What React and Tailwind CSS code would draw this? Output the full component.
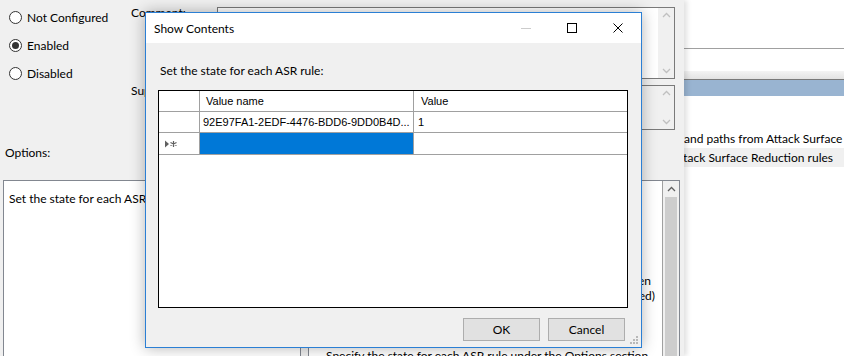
import React from 'react';

const ui = "font-['Lato','Noto_Sans',sans-serif] text-[12px] leading-[15px] text-black";
const grid = "font-['Liberation_Sans','Arial',sans-serif] text-[11px] text-black";

const Chevron = ({ up, color = '#c0c0c0' }) => (
  <svg width="9" height="6" viewBox="0 0 9 6">
    <path d={up ? 'M1 5 L4.5 1.5 L8 5' : 'M1 1 L4.5 4.5 L8 1'} fill="none" stroke={color} strokeWidth="1.3" />
  </svg>
);

const Radio = ({ label, checked }) => (
  <div className="h-[28px] flex items-center pl-[9px] gap-[5px]">
    <div className="w-[13px] h-[13px] rounded-full border border-[#333] bg-white flex items-center justify-center">
      {checked && <div className="w-[7px] h-[7px] rounded-full bg-[#333]" />}
    </div>
    <span>{label}</span>
  </div>
);

const TextBox = ({ className }) => (
  <div className={`border border-[#7a7a7a] flex justify-end ${className}`}>
    <div className="w-[16px] bg-[#f0f0f0] flex flex-col justify-between items-center py-[4px]">
      <Chevron up />
      <Chevron />
    </div>
  </div>
);

// help text, one entry per wrapped line; only the line ends past the dialog are visible
const helpLines = [
  { t: 'Set the state for each ASR rule.' },
  { t: '' },
  { t: 'After enabling this setting, you can set each rule' },
  { t: 'to the following in the options section:' },
  { t: '- Block: the rule will be applied' },
  { t: '' },
  { t: '- Audit Mode: if the rule would normally cause an event, then', right: 'pr-[11px]' },
  { t: 'it will be recorded (although the rule will not actually be applied)', right: 'pr-[7px]' },
  { t: '- Off: the rule will not be applied' },
  { t: '' },
  { t: '' },
  { t: 'Specify the state for each ASR rule under the Options section' },
];

const PolicyWindow = () => (
  <div className={`w-[684px] h-full bg-[#f0f0f0] flex flex-col relative z-10 shadow-[3px_0_5px_rgba(0,0,0,0.12)] ${ui}`}>
    {/* top: state + comment + supported on */}
    <div className="flex h-[130px]">
      <div className="w-[131px] pt-[3px] flex flex-col">
        <Radio label="Not Configured" />
        <Radio label="Enabled" checked />
        <Radio label="Disabled" />
      </div>
      <div className="w-[86px] flex flex-col pt-[5px]">
        <span>Comment:</span>
        <span className="mt-[63px]">Supported on:</span>
      </div>
      <div className="w-[458px] flex flex-col">
        <TextBox className="mt-[7px] h-[72px] bg-white" />
        <TextBox className="mt-[6px] h-[45px] bg-[#f0f0f0]" />
      </div>
    </div>

    <div className="flex h-[50px] pt-[15px]">
      <span className="pl-[5px] w-[308px]">Options:</span>
      <span className="pl-[4px]">Help:</span>
    </div>

    {/* options + help panels */}
    <div className="flex flex-1 min-h-0">
      <div className="ml-[3px] w-[298px] bg-white border border-[#828790] border-b-0 pt-[10px] pl-[5px]">
        Set the state for each ASR rule:
      </div>
      <div className="ml-[7px] w-[372px] bg-white border border-[#828790] border-b-0 flex">
        <div className="flex-1 min-w-0 pt-[2px] overflow-hidden">
          {helpLines.map((l, i) => (
            <div
              key={i}
              className={`h-[15px] whitespace-nowrap flex ${l.right ? `justify-end ${l.right}` : 'pl-[17px]'}`}
            >
              {l.t}
            </div>
          ))}
        </div>
        <div className="w-[17px] border-l border-[#a0a0a0] bg-[#f0f0f0] flex flex-col">
          <div className="h-[16px] flex items-center justify-center">
            <Chevron up color="#606060" />
          </div>
          <div className="flex-1 mx-[2px] bg-[#cdcdcd]" />
        </div>
      </div>
    </div>
  </div>
);

const RightPane = () => (
  <div className={`flex-1 min-w-0 bg-white flex flex-col overflow-hidden ${ui}`}>
    <div className="h-[49px] border-b border-[#a0a0a0]" />
    <div className="h-[22px]" />
    <div className="h-[9px] bg-gradient-to-b from-[#f4f4f4] to-[#e3e3e3] border-b border-[#7a7a7a]" />
    <div className="h-[16px] bg-[#99b4d1]" />
    <div className="h-[33px]" />
    <div className="h-[19px] flex items-center whitespace-nowrap">and paths from Attack Surface Reduction Rules</div>
    <div className="h-[19px] bg-[#f0f0f0] flex items-center justify-end whitespace-nowrap pr-[11px]">
      Configure Attack Surface Reduction rules
    </div>
  </div>
);

const NewRowGlyph = () => (
  <svg width="14" height="8" viewBox="0 0 14 8">
    <path d="M0 0.5 L4 4 L0 7.5 Z" fill="#606060" />
    <path d="M8.5 1 V7 M5.5 2.5 L11.5 5.5 M11.5 2.5 L5.5 5.5" stroke="#606060" strokeWidth="1.2" />
  </svg>
);

const ShowContents = () => (
  <div className={`absolute left-[145px] top-[12px] w-[497px] h-[336px] z-20 border border-[#2b7fd4] bg-[#f0f0f0] flex flex-col shadow-[0_0_14px_rgba(0,0,0,0.3)] ${ui}`}>
    {/* title bar */}
    <div className="h-[30px] bg-white flex items-center">
      <span className="pl-[8px] flex-1">Show Contents</span>
      <div className="w-[46px] h-full flex items-center justify-center">
        <div className="w-[10px] h-px bg-[#cccccc]" />
      </div>
      <div className="w-[46px] h-full flex items-center justify-center">
        <div className="w-[10px] h-[10px] border border-black" />
      </div>
      <div className="w-[46px] h-full flex items-center justify-center">
        <svg width="10" height="10" viewBox="0 0 10 10">
          <path d="M0.5 0.5 L9.5 9.5 M9.5 0.5 L0.5 9.5" stroke="#000" strokeWidth="1" />
        </svg>
      </div>
    </div>

    {/* body */}
    <div className="flex-1 flex flex-col pt-[20px]">
      <span className="pl-[14px]">Set the state for each ASR rule:</span>
      <div className={`ml-[12px] mt-[12px] w-[470px] h-[218px] border border-black bg-white flex flex-col ${grid}`}>
        <div className="h-[21px] flex border-b border-[#a0a0a0]">
          <div className="w-[41px] border-r border-[#a0a0a0]" />
          <div className="w-[214px] border-r border-[#a0a0a0] pl-[6px] flex items-center">Value name</div>
          <div className="flex-1 pl-[7px] flex items-center">Value</div>
        </div>
        <div className="h-[21px] flex border-b border-[#a0a0a0]">
          <div className="w-[41px] border-r border-[#a0a0a0]" />
          <div className="w-[214px] border-r border-[#a0a0a0] pl-[3px] flex items-center whitespace-nowrap">92E97FA1-2EDF-4476-BDD6-9DD0B4D...</div>
          <div className="flex-1 pl-[4px] flex items-center">1</div>
        </div>
        <div className="h-[22px] flex border-b border-[#a0a0a0]">
          <div className="w-[41px] border-r border-[#a0a0a0] flex items-center pl-[6px]">
            <NewRowGlyph />
          </div>
          <div className="w-[214px] border-r border-[#a0a0a0] bg-[#0078d7]" />
          <div className="flex-1" />
        </div>
      </div>
      <div className="flex justify-end gap-[8px] pr-[16px] mt-[10px]">
        <button className="w-[77px] h-[23px] bg-[#e1e1e1] border border-[#adadad]">OK</button>
        <button className="w-[77px] h-[23px] bg-[#e1e1e1] border border-[#adadad]">Cancel</button>
      </div>
    </div>

    {/* size grip */}
    <svg className="absolute right-[3px] bottom-[3px]" width="8" height="8" viewBox="0 0 8 8">
      <g fill="#b8b8b8">
        <rect x="6" y="0" width="2" height="2" />
        <rect x="3" y="3" width="2" height="2" />
        <rect x="6" y="3" width="2" height="2" />
        <rect x="0" y="6" width="2" height="2" />
        <rect x="3" y="6" width="2" height="2" />
        <rect x="6" y="6" width="2" height="2" />
      </g>
    </svg>
  </div>
);

export default function App() {
  return (
    <div className="relative w-[844px] h-[356px] overflow-hidden flex bg-white">
      <PolicyWindow />
      <RightPane />
      <ShowContents />
    </div>
  );
}
